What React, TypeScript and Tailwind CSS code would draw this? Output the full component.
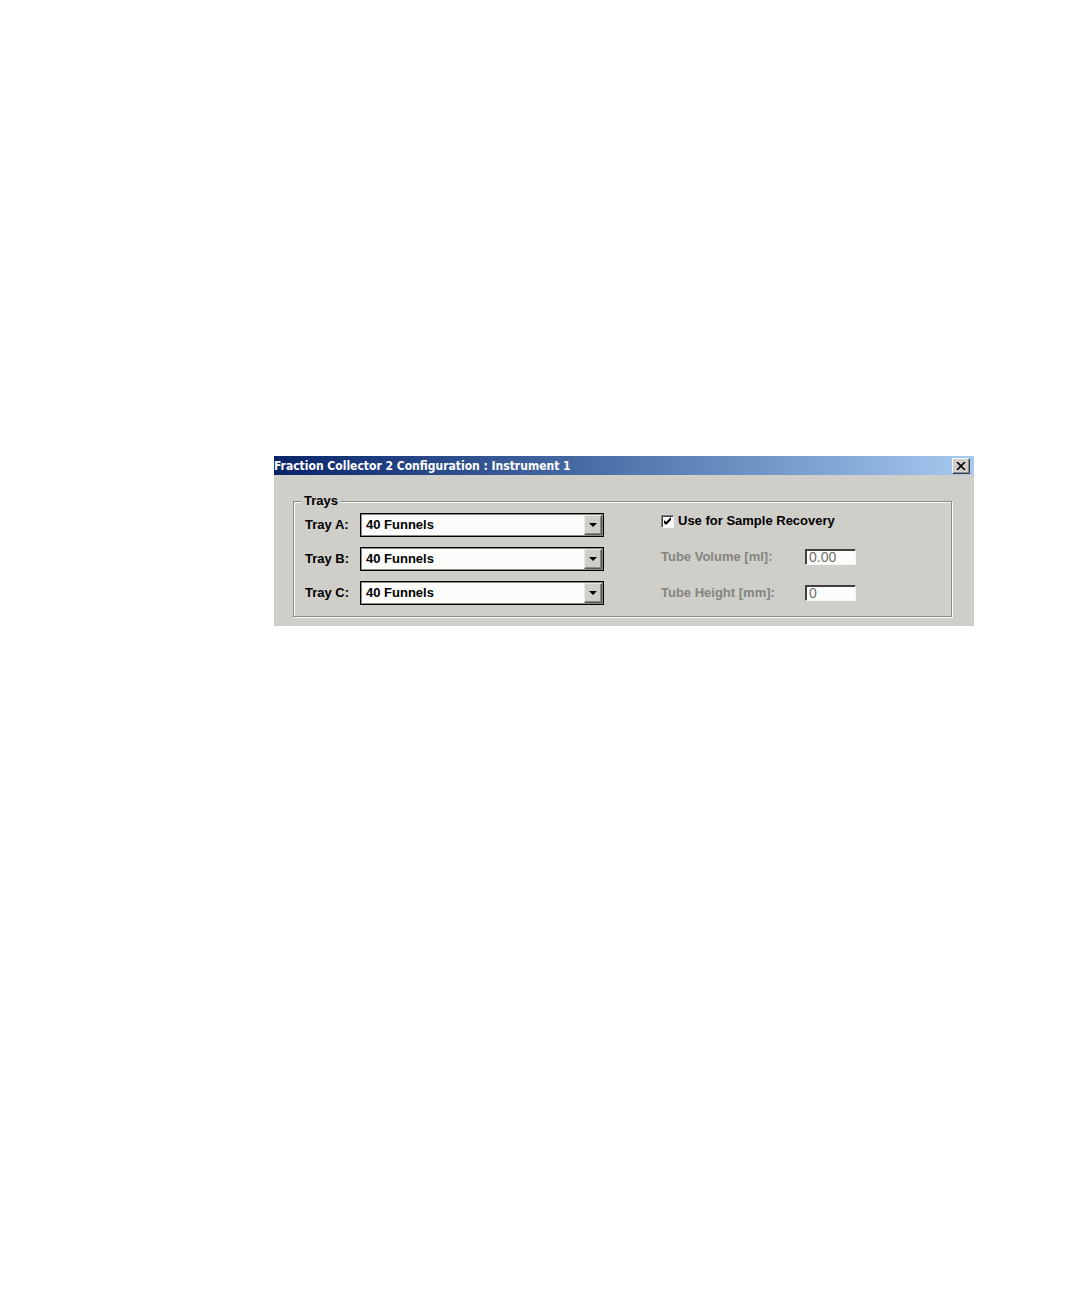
import { useState } from 'react'

const trays = ['A', 'B', 'C']

const trayTypes = ['40 Funnels', '60 Tubes', '96 Wellplate']

const tubeFields = [
  { id: 'tube-volume', label: 'Tube Volume [ml]:', value: '0.00' },
  { id: 'tube-height', label: 'Tube Height [mm]:', value: '0' },
]

function TraySelect({ tray }: { tray: string }) {
  const id = `tray-${tray}`

  return (
    <div className="flex items-center h-6">
      <label htmlFor={id} className="w-[55px]">
        Tray {tray}:
      </label>
      <div className="relative w-[244px]">
        <select
          id={id}
          className="block w-full h-6 appearance-none border border-black bg-[#fcfdfa] pl-[5px] pr-6 shadow-[inset_0_0_0_1px_#8b8b87] outline-none"
        >
          {trayTypes.map((type) => (
            <option key={type}>{type}</option>
          ))}
        </select>
        {/* Drop-down arrow, drawn over the native control */}
        <span className="pointer-events-none absolute inset-y-[2px] right-[2px] flex w-[18px] items-center justify-center border border-t-[#e8e8e4] border-l-[#e8e8e4] border-r-[#555552] border-b-[#555552] bg-[#cfcec9] shadow-[inset_-1px_-1px_0_#8b8b87]">
          <svg width="8" height="4" viewBox="0 0 8 4">
            <path d="M0 0h8L4 4z" fill="#000" />
          </svg>
        </span>
      </div>
    </div>
  )
}

export default function App() {
  const [recovery, setRecovery] = useState(true)

  return (
    <main className="min-h-screen bg-white pt-[456px] pr-[106px] pb-10 pl-[274px] font-['Liberation_Sans',Arial,sans-serif] text-[13px] leading-4 font-bold text-black">
      <section className="bg-[#cfcec9] pb-[9px]">
        <header className="flex h-[19px] items-center justify-between bg-linear-to-r from-[#0a246a] to-[#a6caf0] pr-1">
          <h1 className="font-['DejaVu_Sans_Condensed','DejaVu_Sans',sans-serif] text-[12px] whitespace-nowrap text-white">
            Fraction Collector 2 Configuration : Instrument 1
          </h1>
          <button
            type="button"
            aria-label="Close"
            className="flex h-4 w-[18px] items-center justify-center border border-t-white border-l-white border-r-[#404040] border-b-[#404040] bg-[#cfcec9] shadow-[inset_-1px_-1px_0_#8b8b87]"
          >
            <svg width="10" height="8" viewBox="0 0 10 8">
              <path d="M1 0l8 8M9 0L1 8" stroke="#000" strokeWidth="1.7" />
            </svg>
          </button>
        </header>

        <fieldset className="mt-[18px] mr-[22px] ml-[19px] flex justify-between border border-[#8b8b87] pt-1 pr-[95px] pb-[11px] pl-[11px] shadow-[1px_1px_0_#f8f8f5,inset_1px_1px_0_#f8f8f5]">
          <legend className="-ml-1 bg-[#cfcec9] px-[3px]">Trays</legend>

          <div className="flex flex-col gap-[10px]">
            {trays.map((tray) => (
              <TraySelect key={tray} tray={tray} />
            ))}
          </div>

          <div className="flex w-[195px] flex-col gap-5">
            <label className="flex h-4 items-center gap-1 whitespace-nowrap">
              <span className="relative size-[13px]">
                <input
                  type="checkbox"
                  checked={recovery}
                  onChange={(e) => setRecovery(e.target.checked)}
                  className="block size-[13px] appearance-none border border-t-[#808080] border-l-[#808080] border-r-[#f4f4f0] border-b-[#f4f4f0] bg-white shadow-[inset_1px_1px_0_#404040]"
                />
                {recovery && (
                  <svg
                    className="pointer-events-none absolute inset-0"
                    width="13"
                    height="13"
                    viewBox="0 0 13 13"
                  >
                    <path d="M3 5v3l2 2 5-5V2L5 7z" fill="#000" />
                  </svg>
                )}
              </span>
              Use for Sample Recovery
            </label>

            {tubeFields.map((field) => (
              <div key={field.id} className="flex h-4 items-center justify-between text-[#85857f]">
                <label htmlFor={field.id}>{field.label}</label>
                <input
                  id={field.id}
                  type="text"
                  disabled
                  defaultValue={field.value}
                  className="h-4 w-[51px] border border-t-[#404040] border-l-[#404040] border-r-[#f4f4f0] border-b-[#f4f4f0] bg-[#fcfdfa] pl-[3px] text-[14px] font-normal text-[#6f6f6a] shadow-[inset_1px_1px_0_#404040]"
                />
              </div>
            ))}
          </div>
        </fieldset>
      </section>
    </main>
  )
}
